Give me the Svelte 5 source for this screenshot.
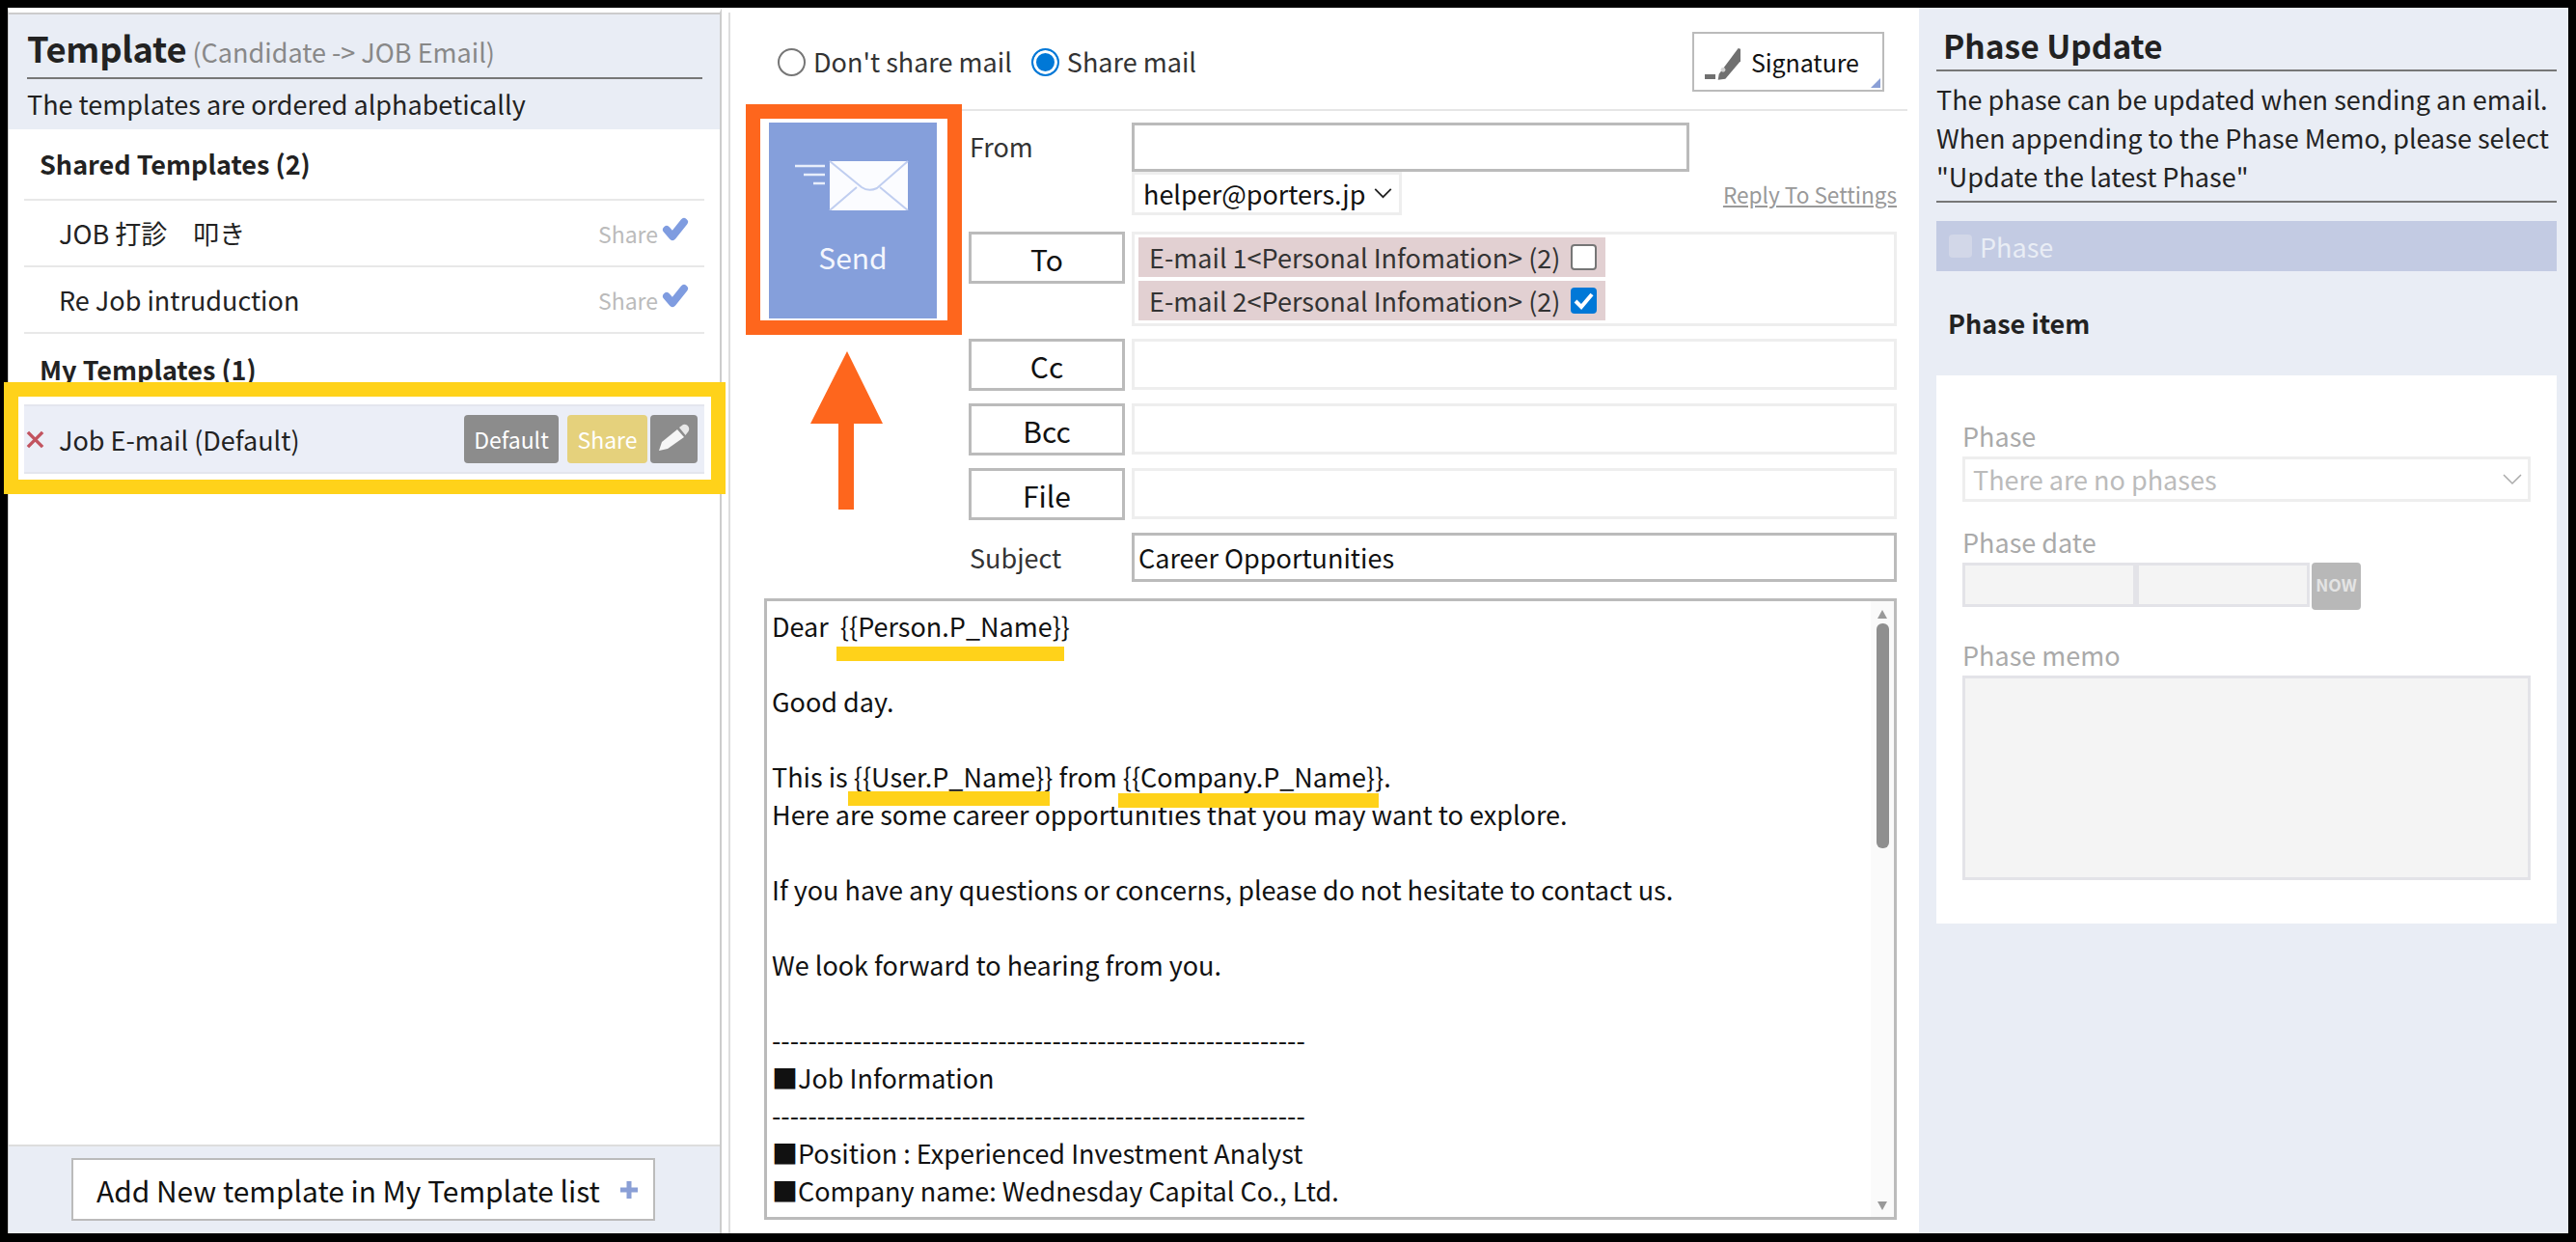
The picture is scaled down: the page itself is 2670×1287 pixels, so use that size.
<script>
  const sections = [
    { title: 'Shared Templates (2)', rows: ['JOB 打診　叩き', 'Re Job intruduction'] }
  ];
  const recipients = [
    { label: 'E-mail 1<Personal Infomation> (2)', checked: false },
    { label: 'E-mail 2<Personal Infomation> (2)', checked: true }
  ];
  const addressRows = ['Cc', 'Bcc', 'File'];
  const dashes = '-'.repeat(59);
</script>

<div class="page">
  <div class="frame">
    <aside class="left">
      <header class="left-head">
        <div class="title-line"><span class="title">Template</span> <span class="subtitle">(Candidate -&gt; JOB Email)</span></div>
        <p class="order-note">The templates are ordered alphabetically</p>
      </header>
      <div class="tpl-list">
        {#each sections as s}
          <h3 class="sec-title ruled">{s.title}</h3>
          {#each s.rows as r}
            <div class="tpl-row ruled">
              <span class="tpl-name">{r}</span>
              <span class="share-flag">Share
                <svg class="check" viewBox="0 0 28 25" aria-hidden="true"><path d="M5 13 L11 20 L23 5" stroke="#7f9ce0" stroke-width="8" stroke-linecap="round" stroke-linejoin="round" fill="none"/></svg>
              </span>
            </div>
          {/each}
        {/each}
        <h3 class="sec-title mine">My Templates (1)</h3>
        <div class="tpl-row selected">
          <svg class="del" viewBox="0 0 20 20" aria-hidden="true"><path d="M2 2 L18 18 M18 2 L2 18" stroke="#c2535f" stroke-width="3.6" fill="none"/></svg>
          <span class="tpl-name sel-name">Job E-mail (Default)</span>
          <span class="tag tag-default">Default</span>
          <span class="tag tag-share">Share</span>
          <span class="tag tag-edit">
            <svg viewBox="0 0 49 50" aria-hidden="true">
              <path d="M9 37 L12 28 L28 15 L35 23 L18 35 Z" fill="#f6f6f6"/>
              <path d="M30 13 L34 10 Q38 9 40 13 Q41 16 38 19 L36.500 21 Z" fill="#e8e8e8"/>
            </svg>
          </span>
        </div>
      </div>
      <footer class="left-foot">
        <button class="add-btn"><span>Add New template in My Template list</span>
          <svg viewBox="0 0 20 20" aria-hidden="true"><path d="M10 1 V19 M1 10 H19" stroke="#8a9fd6" stroke-width="5"/></svg>
        </button>
      </footer>
    </aside>

    <main class="mid">
      <div class="topbar">
        <label class="radio-opt"><span class="radio"></span>Don't share mail</label>
        <label class="radio-opt second"><span class="radio on"></span>Share mail</label>
        <button class="sig-btn">
          <svg class="sig-icon" viewBox="0 0 37 33" aria-hidden="true">
            <path d="M0 27 H11 V32 H0 Z" fill="#707070"/>
            <path d="M14.700 26.700 L34.700 0 L37 0.700 L37 13.300 L21.300 31.700 L13.700 32.700 Z" fill="#707070"/>
            <circle cx="19" cy="22.300" r="2.400" fill="#d4d4d4"/>
          </svg>
          <span>Signature</span>
          <svg class="sig-corner" viewBox="0 0 10 10" aria-hidden="true"><path d="M10 0 V10 H0 Z" fill="#8a9fd6"/></svg>
        </button>
      </div>

      <div class="compose">
        <button class="send">
          <svg class="send-icon" viewBox="0 0 118 52" aria-hidden="true">
            <path d="M0 6 H31 M9 15 H31 M19 24 H31" stroke="#e8eefb" stroke-width="2.500"/>
            <rect x="36" y="1" width="81" height="51" fill="#fbfcff"/>
            <path d="M36 1 L69 28 Q76 33 85 29 L117 1" stroke="#c0cef0" stroke-width="2" fill="none"/>
            <path d="M36 52 L64 28 M117 52 L88 28" stroke="#c0cef0" stroke-width="2" fill="none"/>
          </svg>
          <span>Send</span>
        </button>

        <div class="fields">
          <div class="field-row from">
            <span class="lab">From</span>
            <div class="from-stack">
              <div class="box strong from-input"></div>
              <div class="from-sub">
                <div class="box fake-select"><span>helper@porters.jp</span>
                  <svg viewBox="0 0 20 12" aria-hidden="true"><path d="M1 1 L10 10 L19 1" stroke="#222" stroke-width="2" fill="none"/></svg>
                </div>
                <a class="reply" href="#reply">Reply To Settings</a>
              </div>
            </div>
          </div>

          <div class="field-row to">
            <button class="addr-btn">To</button>
            <div class="box to-box">
              {#each recipients as r}
                <div class="chip"><span>{r.label}</span>
                  <span class="cb" class:on={r.checked}>
                    {#if r.checked}<svg viewBox="0 0 27 27" aria-hidden="true"><path d="M5 14 L11 20 L22 7" stroke="#fff" stroke-width="4" fill="none"/></svg>{/if}
                  </span>
                </div>
              {/each}
            </div>
          </div>

          {#each addressRows as a}
            <div class="field-row addr">
              <button class="addr-btn">{a}</button>
              <div class="box addr-box"></div>
            </div>
          {/each}

          <div class="field-row subject">
            <span class="lab">Subject</span>
            <div class="box strong subject-box">Career Opportunities</div>
          </div>
        </div>
      </div>

      <div class="body-box">
        <div class="body-text">
          <div>Dear &nbsp;{'{{'}Person.P_Name{'}}'}</div>
          <div>&nbsp;</div>
          <div>Good day.</div>
          <div>&nbsp;</div>
          <div>This is {'{{'}User.P_Name{'}}'} from {'{{'}Company.P_Name{'}}'}.</div>
          <div>Here are some career opportunities that you may want to explore.</div>
          <div>&nbsp;</div>
          <div>If you have any questions or concerns, please do not hesitate to contact us.</div>
          <div>&nbsp;</div>
          <div>We look forward to hearing from you.</div>
          <div>&nbsp;</div>
          <div>{dashes}</div>
          <div>■Job Information</div>
          <div>{dashes}</div>
          <div>■Position : Experienced Investment Analyst</div>
          <div>■Company name: Wednesday Capital Co., Ltd.</div>
        </div>
        <div class="scroll">
          <span class="arr up"></span>
          <span class="thumb"></span>
          <span class="arr down"></span>
        </div>
      </div>
    </main>

    <aside class="right">
      <h2 class="phase-title">Phase Update</h2>
      <p class="phase-note">The phase can be updated when sending an email.<br>When appending to the Phase Memo, please select<br>"Update the latest Phase"</p>
      <div class="phase-bar"><span class="phase-cb"></span>Phase</div>
      <h3 class="phase-item">Phase item</h3>
      <div class="phase-card">
        <div class="p-label">Phase</div>
        <div class="p-select"><span>There are no phases</span>
          <svg viewBox="0 0 20 12" aria-hidden="true"><path d="M1 1 L10 10 L19 1" stroke="#aaa" stroke-width="1.500" fill="none"/></svg>
        </div>
        <div class="p-label date-label">Phase date</div>
        <div class="p-date">
          <div class="p-input"></div>
          <div class="p-input"></div>
          <span class="now">NOW</span>
        </div>
        <div class="p-label memo-label">Phase memo</div>
        <div class="p-memo"></div>
      </div>
    </aside>
  </div>

  <!-- Annotation layer painted over the screenshot -->
  <div class="mark yellow-box"></div>
  <div class="mark orange-box"></div>
  <svg class="mark arrow" viewBox="0 0 75 164" aria-hidden="true">
    <path d="M38 0 L75 75 L45 75 L45 164 L29 164 L29 75 L0 75 Z" fill="#fe661d"/>
  </svg>
  <div class="mark ul ul1"></div>
  <div class="mark ul ul2"></div>
  <div class="mark ul ul3"></div>
</div>

<style>
  :global(body) { margin: 0; background: #000; }
  .page {
    position: relative;
    width: 2670px;
    height: 1287px;
    box-sizing: border-box;
    padding: 8px 8px 9px 8px;
    background: #000;
    font-family: "Noto Sans CJK JP", "Noto Sans", sans-serif;
    font-size: 27px;
    color: #222;
    overflow: hidden;
  }
  .frame { display: flex; height: 100%; background: #fff; }
  button { font: inherit; color: inherit; padding: 0; background: #fff; }
  h2, h3, p { margin: 0; }

  /* left */
  .left {
    width: 740px;
    box-sizing: border-box;
    display: flex;
    flex-direction: column;
    border: 2px solid #ccc;
    border-width: 5px 2px 0 1px;
    border-top-color: #fff;
    position: relative;
  }
  .left-head {
    background: #e9edf5;
    height: 121px;
    box-sizing: border-box;
    padding: 0 18px 0 19px;
    border-top: 2px solid #ccc;
  }
  .title-line {
    height: 67px;
    box-sizing: border-box;
    border-bottom: 2px solid #777;
    line-height: 68px;
    white-space: nowrap;
  }
  .title { font-size: 36.300px; font-weight: 700; letter-spacing: -0.2px; }
  .subtitle { font-size: 27px; color: #888; }
  .order-note { line-height: 52px; white-space: nowrap; }
  .tpl-list { flex: 1; padding: 0 16px; }
  .ruled { border-bottom: 2px solid #e8e8e8; }
  .sec-title {
    font-size: 27px;
    font-weight: 700;
    padding-left: 16px;
    line-height: 71px;
    height: 74px;
    box-sizing: border-box;
  }
  .mine { height: 73px; line-height: 74px; }
  .tpl-row {
    height: 69px;
    box-sizing: border-box;
    display: flex;
    align-items: center;
    padding-left: 36px;
  }
  .share-flag {
    margin-left: auto;
    font-size: 23px;
    color: #bbb;
    display: flex;
    align-items: center;
    gap: 4px;
    padding-right: 16px;
  }
  .check { width: 28px; height: 25px; margin-top: -8px; }
  .selected {
    height: 72px;
    padding-left: 0;
    background: #ebeef7;
    border-top: 2px solid #e4e6ee;
    border-bottom: 2px solid #e4e6ee;
  }
  .del { width: 19px; height: 19px; margin-left: 2px; flex: none; }
  .sel-name { margin-left: 15px; }
  .tag {
    height: 50px;
    border-radius: 4px;
    color: #fff;
    font-size: 23px;
    display: flex;
    align-items: center;
    justify-content: center;
    box-sizing: border-box;
  }
  .tag-default { width: 98px; background: #8c8c8c; margin-left: auto; }
  .tag-share { width: 83px; background: #e5d17c; margin-left: 9px; }
  .tag-edit { width: 49px; background: #8c8c8c; margin-left: 3px; margin-right: 7px; }
  .tag-edit svg { width: 49px; height: 50px; display: block; }
  .left-foot {
    height: 92px;
    box-sizing: border-box;
    border-top: 2px solid #ddd;
    background: #e9edf5;
    padding: 12px 0 0 65px;
  }
  .add-btn {
    width: 605px;
    height: 65px;
    box-sizing: border-box;
    border: 2px solid #bbb;
    background: #fff;
    display: flex;
    align-items: center;
    padding-left: 24px;
    white-space: nowrap;
    font-size: 29.900px;
    color: #111;
  }
  .add-btn svg { width: 20px; height: 20px; margin-left: 20px; }

  /* middle */
  .mid {
    width: 1241px;
    box-sizing: border-box;
    padding: 0 12px 0 44px;
    display: flex;
    flex-direction: column;
    position: relative;
  }
  .mid::before {
    content: "";
    position: absolute;
    left: 7px;
    top: 5px;
    bottom: 0;
    width: 2px;
    background: #ddd;
  }
  .topbar {
    height: 107px;
    box-sizing: border-box;
    border-bottom: 2px solid #e6e6e6;
    display: flex;
    align-items: flex-start;
    padding: 26px 24px 0 14px;
    color: #333;
    white-space: nowrap;
  }
  .radio-opt { display: flex; align-items: center; gap: 8px; height: 60px; line-height: 60px; }
  .second { margin-left: 20px; }
  .radio {
    width: 29px;
    height: 29px;
    border-radius: 50%;
    box-sizing: border-box;
    border: 2px solid #767676;
    background: #fff;
    display: block;
  }
  .radio.on {
    border-color: #0078d7;
    background: #0078d7;
    box-shadow: inset 0 0 0 3px #fff;
  }
  .sig-btn {
    margin-left: auto;
    margin-top: -1px;
    width: 199px;
    height: 62px;
    box-sizing: border-box;
    border: 2px solid #bbb;
    position: relative;
    display: flex;
    align-items: center;
    padding-left: 11px;
    font-size: 25px;
    letter-spacing: -0.1px;
  }
  .sig-btn span { margin-left: 11px; color: #111; }
  .sig-icon { width: 37px; height: 33px; margin-top: 4px; }
  .sig-corner { position: absolute; right: 2px; bottom: 2px; width: 10px; height: 10px; }

  .compose { display: flex; margin-top: 12px; }
  .send {
    width: 174px;
    height: 203px;
    margin-left: 5px;
    border: 0;
    background: #859fdb;
    color: #fff;
    display: flex;
    flex-direction: column;
    align-items: center;
    flex: none;
    padding-top: 39px;
    box-sizing: border-box;
  }
  .send-icon { width: 118px; height: 52px; margin-left: -2px; display: block; }
  .send span { margin-top: 26px; font-size: 30px; color: #f3f6fd; }
  .fields { margin-left: 33px; width: 962px; flex: none; }
  .field-row { display: flex; }
  .lab { width: 162px; flex: none; padding-left: 1px; box-sizing: border-box; color: #333; }
  .box { box-sizing: border-box; border: 3px solid #eee; background: #fff; }
  .strong { border-color: #bbb; }
  .from-stack { margin-left: 7px; flex: 1; }
  .from .lab { line-height: 50px; height: 50px; }
  .from-input { width: 578px; height: 51px; }
  .from-sub { display: flex; align-items: center; }
  .fake-select {
    width: 280px;
    height: 45px;
    display: flex;
    align-items: center;
    padding-left: 9px;
    color: #111;
    white-space: nowrap;
  }
  .fake-select svg { width: 19px; height: 11px; margin-left: auto; margin-right: 7px; }
  .reply {
    margin-left: auto;
    padding-top: 2px;
    font-size: 22.600px;
    color: #999;
    text-decoration: underline;
    white-space: nowrap;
  }
  .to { margin-top: 17px; }
  .addr-btn {
    width: 162px;
    height: 54px;
    flex: none;
    box-sizing: border-box;
    border: 3px solid #bbb;
    background: #fff;
    color: #111;
    font-size: 30px;
    padding-top: 2px;
  }
  .to-box {
    margin-left: 7px;
    flex: 1;
    height: 98px;
    padding: 3px 4px;
    display: flex;
    flex-direction: column;
    gap: 4px;
  }
  .chip {
    width: 484px;
    height: 41px;
    background: #e2d0d2;
    display: flex;
    align-items: center;
    padding-left: 11px;
    box-sizing: border-box;
    color: #333;
    white-space: nowrap;
  }
  .cb {
    width: 27px;
    height: 27px;
    box-sizing: border-box;
    border: 2px solid #767676;
    border-radius: 4px;
    background: #fff;
    margin-left: auto;
    margin-right: 9px;
    display: block;
  }
  .cb.on { border: 0; background: #0078d7; }
  .cb svg { display: block; width: 27px; height: 27px; }
  .addr { margin-top: 13px; }
  .addr-box { margin-left: 7px; flex: 1; height: 53px; }
  .subject { margin-top: 13px; }
  .subject .lab { line-height: 52px; }
  .subject-box {
    margin-left: 7px;
    flex: 1;
    height: 51px;
    line-height: 45px;
    padding-left: 4px;
    color: #111;
  }

  .body-box {
    margin-top: 16px;
    margin-right: 11px;
    height: 644px;
    box-sizing: border-box;
    border: 3px solid #bbb;
    display: flex;
    overflow: hidden;
  }
  .body-text {
    flex: 1;
    padding: 6px 0 0 5px;
    line-height: 39px;
    color: #111;
    white-space: nowrap;
  }
  .scroll {
    width: 24px;
    background: #fafafa;
    display: flex;
    flex-direction: column;
    align-items: center;
    padding-top: 9px;
    box-sizing: border-box;
  }
  .arr { width: 0; height: 0; border-left: 5px solid transparent; border-right: 5px solid transparent; }
  .up { border-bottom: 9px solid #999; }
  .down { border-top: 9px solid #999; margin-top: auto; margin-bottom: 7px; }
  .thumb { width: 13px; height: 233px; border-radius: 6px; background: #8f8f8f; margin-top: 5px; }

  /* right */
  .right {
    flex: 1;
    background: #e9edf5;
    padding: 0 12px 0 18px;
    box-sizing: border-box;
  }
  .phase-title {
    font-size: 33.500px;
    font-weight: 700;
    height: 66px;
    box-sizing: border-box;
    border-bottom: 2px solid #777;
    padding-left: 7px;
    line-height: 78px;
  }
  .phase-note {
    line-height: 40px;
    height: 136px;
    box-sizing: border-box;
    padding-top: 9px;
    border-bottom: 2px solid #777;
    white-space: nowrap;
    font-size: 27px;
    color: #222;
  }
  .phase-bar {
    margin-top: 19px;
    height: 52px;
    background: #c3cbe3;
    display: flex;
    align-items: center;
    padding-left: 13px;
    color: #e9edf5;
    gap: 8px;
  }
  .phase-cb {
    width: 24px;
    height: 24px;
    border-radius: 4px;
    background: #d2d7e8;
    display: block;
  }
  .phase-item {
    font-size: 27px;
    font-weight: 700;
    padding-left: 12px;
    height: 108px;
    line-height: 107px;
  }
  .phase-card {
    background: #fff;
    height: 568px;
    box-sizing: border-box;
    padding: 44px 27px 0;
    color: #aaa;
  }
  .p-label { height: 40px; line-height: 38px; color: #aaa; }
  .p-select {
    height: 47px;
    box-sizing: border-box;
    border: 3px solid #eee;
    display: flex;
    align-items: center;
    padding-left: 8px;
    color: #bbb;
  }
  .p-select svg { width: 20px; height: 12px; margin-left: auto; margin-right: 6px; }
  .date-label { margin-top: 23px; }
  .p-date { display: flex; align-items: flex-start; }
  .p-input {
    width: 180px;
    height: 46px;
    box-sizing: border-box;
    border: 3px solid #e3e3e8;
    background: #f4f4f4;
  }
  .now {
    width: 51px;
    height: 49px;
    margin-left: 2px;
    border-radius: 4px;
    background: #b8b8b8;
    color: #e4e4e4;
    font-size: 17.500px;
    font-weight: 700;
    display: flex;
    align-items: center;
    justify-content: center;
    line-height: 1;
    padding-bottom: 3px;
    box-sizing: border-box;
  }
  .memo-label { margin-top: 28px; }
  .p-memo {
    height: 212px;
    box-sizing: border-box;
    border: 3px solid #e3e3e8;
    background: #f4f4f4;
  }

  /* annotations */
  .mark { position: absolute; box-sizing: border-box; pointer-events: none; }
  .yellow-box { left: 4px; top: 396px; width: 748px; height: 116px; border: 15px solid #ffd21a; }
  .orange-box { left: 773px; top: 108px; width: 224px; height: 239px; border: 15px solid #fe661d; }
  .arrow { left: 840px; top: 364px; width: 75px; height: 164px; }
  .ul { background: #ffd21a; height: 15px; }
  .ul1 { left: 867px; top: 670px; width: 236px; }
  .ul2 { left: 879px; top: 820px; width: 209px; }
  .ul3 { left: 1159px; top: 822px; width: 270px; }
</style>
